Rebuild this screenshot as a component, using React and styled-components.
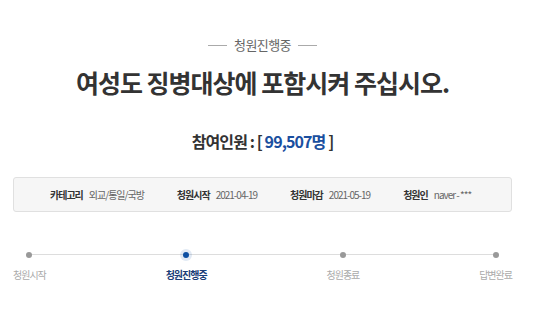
import React from 'react'
import styled, { createGlobalStyle } from 'styled-components'

const GlobalStyle = createGlobalStyle`
  html, body {
    margin: 0;
    padding: 0;
    background: #fff;
    font-family: "Noto Sans CJK KR", "Noto Sans", sans-serif;
  }
`

const info = [
  { label: '카테고리', value: '외교/통일/국방' },
  { label: '청원시작', value: '2021-04-19' },
  { label: '청원마감', value: '2021-05-19' },
  { label: '청원인', value: 'naver - ***' },
]

const steps = [
  { label: '청원시작' },
  { label: '청원진행중', active: true },
  { label: '청원종료' },
  { label: '답변완료' },
]

export default () => {
  return (
    <Page>
      <GlobalStyle />
      <Status>청원진행중</Status>
      <Title>여성도 징병대상에 포함시켜 주십시오.</Title>
      <Count>
        참여인원 : [ <Number>99,507명</Number> ]
      </Count>
      <InfoBox>
        {info.map(item => (
          <InfoItem key={item.label}>
            <InfoLabel>{item.label}</InfoLabel>
            <InfoValue>{item.value}</InfoValue>
          </InfoItem>
        ))}
      </InfoBox>
      <Progress>
        {steps.map(step => (
          <Step key={step.label}>
            <Dot $active={step.active} />
            <StepLabel $active={step.active}>{step.label}</StepLabel>
          </Step>
        ))}
      </Progress>
    </Page>
  )
}

const Page = styled.div`
  width: 499px;
  margin-left: 13px;
  padding-top: 34px;
  display: flex;
  flex-direction: column;
  align-items: center;
`

const Status = styled.div`
  display: flex;
  align-items: center;
  gap: 7px;
  font-size: 13px;
  line-height: 22px;
  color: #666;
  letter-spacing: -0.6px;

  &::before,
  &::after {
    content: '';
    width: 19px;
    height: 1px;
    background: #aaa;
  }
`

const Title = styled.h1`
  margin: 10px 0 0;
  font-size: 25px;
  line-height: 32px;
  font-weight: 700;
  color: #333;
  letter-spacing: -1px;
  white-space: nowrap;
`

const Count = styled.div`
  margin-top: 31px;
  font-size: 16px;
  line-height: 24px;
  font-weight: 700;
  color: #333;
  letter-spacing: -0.9px;
  white-space: nowrap;
`

const Number = styled.span`
  color: #1a4f9f;
`

const InfoBox = styled.div`
  margin-top: 24px;
  align-self: stretch;
  height: 35px;
  box-sizing: border-box;
  background: #f6f6f6;
  border: 1px solid #e0e0e0;
  border-radius: 3px;
  display: flex;
  align-items: center;
  gap: 33px;
  padding-left: 36px;
`

const InfoItem = styled.div`
  display: flex;
  align-items: center;
  flex-shrink: 0;
  gap: 6px;
  font-size: 10px;
  letter-spacing: -1px;
  white-space: nowrap;
`

const InfoLabel = styled.span`
  font-weight: 700;
  color: #333;
`

const InfoValue = styled.span`
  color: #666;
`

const Progress = styled.div`
  position: relative;
  align-self: stretch;
  margin-top: 40px;
  display: flex;
  justify-content: space-between;

  &::before {
    content: '';
    position: absolute;
    top: 2px;
    left: 16px;
    right: 16px;
    height: 1px;
    background: #ddd;
  }
`

const Step = styled.div`
  position: relative;
  display: flex;
  flex-direction: column;
  align-items: center;
  gap: 9px;
`

const Dot = styled.span`
  width: 6px;
  height: 6px;
  border-radius: 50%;
  background: ${p => (p.$active ? '#0b4ea2' : '#999')};
  box-shadow: ${p => (p.$active ? '0 0 0 3px rgba(11, 78, 162, 0.12)' : 'none')};
`

const StepLabel = styled.span`
  font-size: 10px;
  line-height: 16px;
  letter-spacing: -1px;
  white-space: nowrap;
  color: ${p => (p.$active ? '#1b3e78' : '#aaa')};
  font-weight: ${p => (p.$active ? 700 : 400)};
`
